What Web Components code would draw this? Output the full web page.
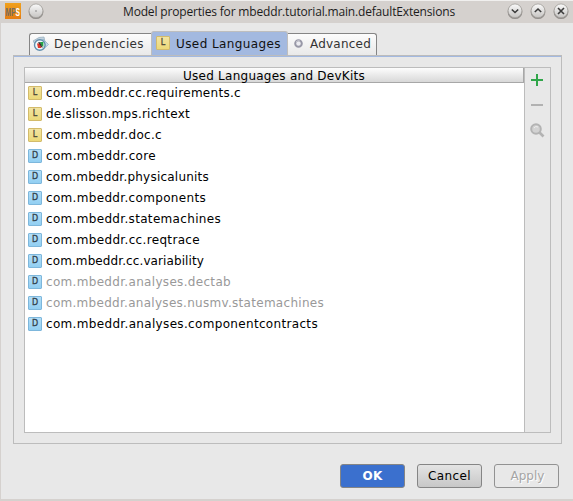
<!DOCTYPE html>
<html lang="en"><head><meta charset="utf-8"><title>Model properties</title>
<style>html,body{margin:0;width:573px;height:501px;overflow:hidden}body{font:12px "DejaVu Sans",sans-serif;color:#000}</style></head>
<body><model-dialog></model-dialog>
<script>
const define=(name,html,setup)=>customElements.define(name,class extends HTMLElement{
  constructor(){super();const t=document.createElement('template');t.innerHTML=html;this.attachShadow({mode:'open'}).append(t.content.cloneNode(true));}
  connectedCallback(){if(setup)setup(this,this.shadowRoot);}
});

/* Label whose letter spacing is adjusted to fill the advance width in "w". */
define('fit-label',`<style>:host{display:inline-block;white-space:pre;flex:none}span{display:inline-block}</style><span></span>`,(h,r)=>{
  const s=r.querySelector('span'),w=+h.getAttribute('w');s.textContent=h.getAttribute('text');
  h.style.width=w+'px';
  s.style.letterSpacing=((w-s.getBoundingClientRect().width)/s.textContent.length)+'px';
});

define('kind-icon',`<style>:host{display:block;width:14px;height:14px;flex:none}
div{box-sizing:border-box;width:14px;height:14px;border:1px solid #d3bb6b;border-radius:1px;background:linear-gradient(#f2e4a2,#ecd978);font:8px/12px "DejaVu Sans",sans-serif;-webkit-text-stroke:.3px currentColor;color:#4f4a38;text-align:center}
:host([kind=D]) div{border-color:#7db7dc;background:linear-gradient(#b3def7,#92cff2);color:#34434e}</style><div></div>`,(h,r)=>{r.querySelector('div').textContent=h.getAttribute('kind');});

define('round-button',`<style>:host{display:block;width:16px;height:16px;flex:none}svg{display:block;overflow:visible}</style>
<svg width="16" height="16"><defs><linearGradient id="g" x2="0" y2="1"><stop stop-color="#fafafa"/><stop offset="1" stop-color="#c6c4c2"/></linearGradient></defs>
<circle cx="8" cy="8.7" r="7.4" fill="#7f7c79" opacity=".8"/><circle cx="8" cy="7.8" r="6.9" fill="url(#g)" stroke="#a09d9a" stroke-width=".7"/><path fill="none" stroke="#3b3b3b" stroke-width="1.6"/></svg>`,(h,r)=>{
  r.querySelector('path').setAttribute('d',{dot:'M7.5 8h1',down:'M4.8 6.5 8 9.5l3.2-3',up:'M4.8 9 8 6l3.2 3',close:'M5 5l6 6M11 5l-6 6'}[h.getAttribute('kind')]);
  if(h.getAttribute('kind')==='dot')r.querySelector('path').style.strokeWidth=1;
});

define('title-bar',`<style>:host{display:flex;box-sizing:border-box;height:23px;padding:3px 4px 0 5px;background:#d5d1ce;border-top:1px solid #f0efee;font:12px/16px "Open Sans","Noto Sans",sans-serif;color:#1c1c1c}
.logo{margin-right:7px;margin-top:-1px}.title{margin-left:79px;margin-top:0;width:332px}.controls{display:flex;gap:7px;margin-left:auto}round-button{margin-top:-1px}</style>
<svg class="logo" width="16" height="16"><defs><linearGradient id="o" x2="0" y2="1"><stop stop-color="#f0a11c"/><stop offset="1" stop-color="#e47d14"/></linearGradient></defs><rect width="16" height="16" fill="url(#o)"/>
<text transform="translate(.6 12.7) scale(.58 1)" font-family="Liberation Sans" font-weight="bold" font-size="11.5" fill="#716b63">MP<tspan fill="#fff">S</tspan></text></svg>
<round-button kind="dot"></round-button><div class="title"><fit-label w="332" text="Model properties for mbeddr.tutorial.main.defaultExtensions"></fit-label></div>
<div class="controls"><round-button kind="down"></round-button><round-button kind="up"></round-button><round-button kind="close"></round-button></div>`);

define('page-tab',`<style>:host{display:flex;box-sizing:border-box;height:22px;align-items:center;border:1px solid #858585;border-bottom:0;border-left-width:0;border-radius:0 3px 0 0;background:linear-gradient(#fcfcfc,#e9e9e9);color:#333;line-height:18px}
:host([first]){border-left-width:1px;border-radius:3px 0 0 0;border-right:0}:host([selected]){height:24px;background:#a3b9e0;border:1px solid #bebebe;border-bottom:0;border-radius:3px 3px 0 0;color:#111}::slotted(*){flex:none}</style><slot></slot>`);

define('language-row',`<style>:host{display:flex;height:21px;align-items:center;padding-left:3px;gap:4px;line-height:21px}:host([off]){color:#999}kind-icon,fit-label{margin-top:-1px}</style>`);

define('language-table',`<style>:host{display:block;width:499px;background:#fff}header{box-sizing:border-box;height:15px;border-bottom:1px solid #a7a7a7;border-right:1px solid #a7a7a7;background:linear-gradient(#fdfdfd,#d8d8d8);text-align:center;line-height:16px}</style><header><fit-label w="182" text="Used Languages and DevKits"></fit-label></header><main></main>`,(h,r)=>{
  const rows=[['L','com.mbeddr.cc.requirements.c',195],['L','de.slisson.mps.richtext',144],['L','com.mbeddr.doc.c',116],['D','com.mbeddr.core',110],['D','com.mbeddr.physicalunits',163],['D','com.mbeddr.components',160],['D','com.mbeddr.statemachines',175],['D','com.mbeddr.cc.reqtrace',154],['D','com.mbeddr.cc.variability',158],['D','com.mbeddr.analyses.dectab',185,1],['D','com.mbeddr.analyses.nusmv.statemachines',278,1],['D','com.mbeddr.analyses.componentcontracts',272]];
  for(const [k,t,w,off] of rows){const e=document.createElement('language-row');if(off)e.setAttribute('off','');
    const i=document.createElement('kind-icon');i.setAttribute('kind',k);const l=document.createElement('fit-label');l.setAttribute('text',t);l.setAttribute('w',w);e.shadowRoot.append(i,l);r.querySelector('main').append(e);}
});

define('tool-strip',`<style>:host{display:block;box-sizing:border-box;width:26px;border-left:1px solid #bcbcbc}svg{display:block}</style>
<svg width="25" height="80"><path d="M6 12h12M12 6v12" stroke="#30a64a" stroke-width="2"/><path d="M6 37h12" stroke="#b2b2b2" stroke-width="2"/><circle cx="11" cy="61" r="4.8" fill="#d2d2d2" stroke="#b3b3b3" stroke-width="2"/><path d="M9 60a3 3 0 0 1 4-1" stroke="#eee" fill="none"/><path d="m14.5 64.5 4 4" stroke="#b3b3b3" stroke-width="2.6"/></svg>`);

define('push-button',`<style>:host{display:flex;box-sizing:border-box;width:65px;height:24px;border:1px solid #858585;border-radius:3px;background:linear-gradient(#e4e4e4,#c7c7c7);align-items:center;justify-content:center;line-height:22px}
:host([primary]){background:#3b70ce;color:#fff;font-weight:bold}:host([off]){background:#e8e8e8;color:#a5a5a5;border-color:#929292;text-shadow:1px 1px #fff}:host([off]) ::slotted(*){margin-left:2px}</style><slot></slot>`);

define('model-dialog',`<style>:host{display:block;box-sizing:border-box;width:573px;height:501px;background:#e8e8e8;border-bottom:2px solid #d5d1ce}
.body{border-left:1px solid #d5d1ce;height:476px;box-sizing:border-box;padding:8px 11px 0 12px}
.tabs{display:flex;align-items:flex-end;height:24px;padding-left:16px}
.panel{box-sizing:border-box;height:389px;border:1px solid #bcbcbc;padding:10px 10px;box-shadow:inset 0 1px #a3b9e0;}
.content{display:flex;box-sizing:border-box;width:527px;height:366px;border:1px solid #bcbcbc;margin-top:1px}
.actions{display:flex;gap:12px;justify-content:flex-end;margin-top:20px;padding-right:3px}
.dep{width:122px}.used{width:137px}.adv{width:89px}.dep svg{margin:-2px 5px 0 3px}.tabs fit-label{align-self:flex-start;margin-top:1px}.tabs .used fit-label{margin-top:3px}.used kind-icon{margin:-1px 6px 0 4px}.adv svg{margin:-2px 7px 0 6px}</style>
<title-bar></title-bar><div class="body"><div class="tabs">
<page-tab class="dep" first><svg width="16" height="16"><path d="M0 5 6 1.5 11 1l1 5-7 7Z" fill="#c3d3de" stroke="#91aabb" stroke-width=".7"/><path d="m10 3 5.5 5.5-5 4.5-3-5Z" fill="#c5dcec" stroke="#94b3c9" stroke-width=".8"/><circle cx="6.8" cy="9" r="5.3" fill="#f3fafc" stroke="#628fae" stroke-width="1.4"/><path d="M7 6h3.4v5L8 9Z" fill="#23a446"/><path d="m4 7.4 2.8-.2L8.6 12H5Z" fill="#e03a2c"/><path d="m5 6 2 .2 3 5.6-2-1Z" fill="#343434"/></svg><fit-label w="90" text="Dependencies"></fit-label></page-tab>
<page-tab class="used" selected><kind-icon kind="L"></kind-icon><fit-label w="105" text="Used Languages"></fit-label></page-tab>
<page-tab class="adv"><svg width="9" height="9"><circle cx="4.5" cy="4.5" r="3.3" fill="#ececf1" stroke="#9898a7" stroke-width="2"/><path d="M2 3a3 3 0 0 1 4-1" fill="none" stroke="#c5c5ce"/></svg><fit-label w="61" text="Advanced"></fit-label></page-tab></div>
<div class="panel"><div class="content"><language-table></language-table><tool-strip></tool-strip></div></div>
<div class="actions"><push-button primary><fit-label w="20" text="OK"></fit-label></push-button><push-button><fit-label w="43" text="Cancel"></fit-label></push-button><push-button off><fit-label w="34" text="Apply"></fit-label></push-button></div></div>`);
</script></body></html>
